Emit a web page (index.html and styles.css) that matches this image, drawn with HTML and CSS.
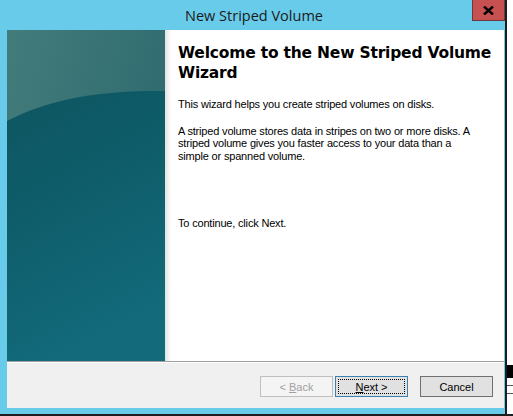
FILE: index.html
```html
<!DOCTYPE html>
<html>
<head>
<meta charset="utf-8">
<link rel="stylesheet" href="styles.css">
</head>
<body>
<div class="screen">
  <div class="window">
    <div class="titlebar">
      <span class="title">New Striped Volume</span>
      <div class="close"><svg width="11" height="9" viewBox="0 0 11 9"><path d="M1 0.5 L10 8.5 M10 0.5 L1 8.5" stroke="#000" stroke-width="2.4"/></svg></div>
    </div>
    <div class="client">
      <div class="main">
        <div class="banner">
          <svg width="158" height="331" viewBox="0 0 158 331" preserveAspectRatio="none">
            <defs>
              <linearGradient id="top" x1="0" y1="0" x2="1" y2="0.6">
                <stop offset="0" stop-color="#437c7b"/>
                <stop offset="1" stop-color="#2c686e"/>
              </linearGradient>
              <linearGradient id="bot" x1="0" y1="0" x2="0.3" y2="1">
                <stop offset="0" stop-color="#0d5560"/>
                <stop offset="0.5" stop-color="#0f5e6c"/>
                <stop offset="1" stop-color="#126a7a"/>
              </linearGradient>
            </defs>
            <rect width="158" height="331" fill="url(#top)"/>
            <path d="M0 91 C40 70 90 60 158 61 L158 331 L0 331 Z" fill="url(#bot)"/>
          </svg>
          <div class="shade"></div>
        </div>
        <div class="content">
          <h1>Welcome to the New Striped Volume Wizard</h1>
          <p class="p1">This wizard helps you create striped volumes on disks.</p>
          <p class="p2">A striped volume stores data in stripes on two or more disks. A striped volume gives you faster access to your data than a simple or spanned volume.</p>
          <p class="p3">To continue, click Next.</p>
        </div>
      </div>
      <div class="footer">
        <button class="btn disabled"><span>&lt; <u>B</u>ack</span></button>
        <button class="btn default"><span class="focus"><span><u>N</u>ext &gt;</span></span></button>
        <button class="btn cancel"><span>Cancel</span></button>
      </div>
    </div>
  </div>
  <div class="desk">
    <div class="d1"></div>
    <div class="d2"></div>
    <div class="d2"></div>
  </div>
</div>
</body>
</html>
```

FILE: styles.css
```css
html, body {
  margin: 0;
  padding: 0;
  background: #1d1d1d;
}
.screen {
  display: flex;
  width: 513px;
  height: 416px;
  overflow: hidden;
}
.window {
  width: 505px;
  height: 414px;
  background: #68cbea;
  border-right: 2px solid #1d1d1d;
  display: flex;
  flex-direction: column;
  flex: none;
}
.titlebar {
  height: 30px;
  position: relative;
  display: flex;
  align-items: center;
  justify-content: center;
  flex: none;
}
.title {
  font-family: "Open Sans", "Noto Sans", sans-serif;
  font-size: 14.5px;
  color: #1b1b1b;
  margin-left: 3px;
  margin-top: 1px;
}
.close {
  position: absolute;
  right: 0;
  top: 0;
  width: 31px;
  height: 20px;
  background: #c75050;
  border: 1px solid #6b3b3b;
  border-top: none;
  display: flex;
  align-items: center;
  justify-content: center;
}
.client {
  margin: 0 1px 0 7px;
  height: 378px;
  display: flex;
  flex-direction: column;
  background: #fff;
}
.main {
  height: 331px;
  display: flex;
  flex: none;
  border-bottom: 1px solid #a0a0a0;
}
.banner {
  display: flex;
  flex: none;
}
.banner svg {
  display: block;
}
.shade {
  width: 6px;
  background: linear-gradient(to right, #e2e2e2, #f3f3f3 60%, #fff);
}
.content {
  padding: 13px 10px 0 7px;
  font-family: "Liberation Sans", Arial, sans-serif;
  font-size: 11px;
  letter-spacing: -0.18px;
  color: #000;
}
h1 {
  font-family: "DejaVu Sans", Verdana, sans-serif;
  font-weight: bold;
  font-size: 15.5px;
  line-height: 20px;
  margin: 0 0 15px 0;
  letter-spacing: -0.2px;
}
p {
  margin: 0;
  line-height: 12.5px;
}
.p1 {
  margin-bottom: 14px;
}
.p2 {
  width: 294px;
}
.p3 {
  margin-top: 55px;
}
.footer {
  flex: 1;
  background: #f0f0f0;
  border-top: 1px solid #fff;
  display: flex;
  align-items: flex-start;
  justify-content: flex-end;
  padding: 13px 11px 0 0;
}
.btn {
  width: 73px;
  height: 21px;
  margin: 0;
  padding: 0;
  font-family: "Liberation Sans", Arial, sans-serif;
  font-size: 11px;
  color: #000;
  background: #e1e1e1;
  border: 1px solid #adadad;
  display: flex;
  align-items: center;
  justify-content: center;
}
.btn span {
  white-space: pre;
}
.btn u {
  text-decoration: underline;
}
.disabled {
  color: #a0a0a0;
  background: #f4f4f4;
  border-color: #bfbfbf;
}
.default {
  margin-left: 2px;
  border-color: #3c7fb1;
  padding: 2px;
  background: #e1e1e1;
}
.btn .focus {
  flex: 1;
  align-self: stretch;
  display: flex;
  align-items: center;
  justify-content: center;
  border: 1px dotted #000;
}
.cancel {
  margin-left: 12px;
  border-color: #707070;
}
.desk {
  flex: 1;
  height: 414px;
  background: #fff;
  display: flex;
  flex-direction: column;
}
.d1 {
  height: 13px;
  background: #000;
  margin-top: 365px;
}
.d2 {
  height: 1px;
  background: #555;
  margin-top: 7px;
}
```
